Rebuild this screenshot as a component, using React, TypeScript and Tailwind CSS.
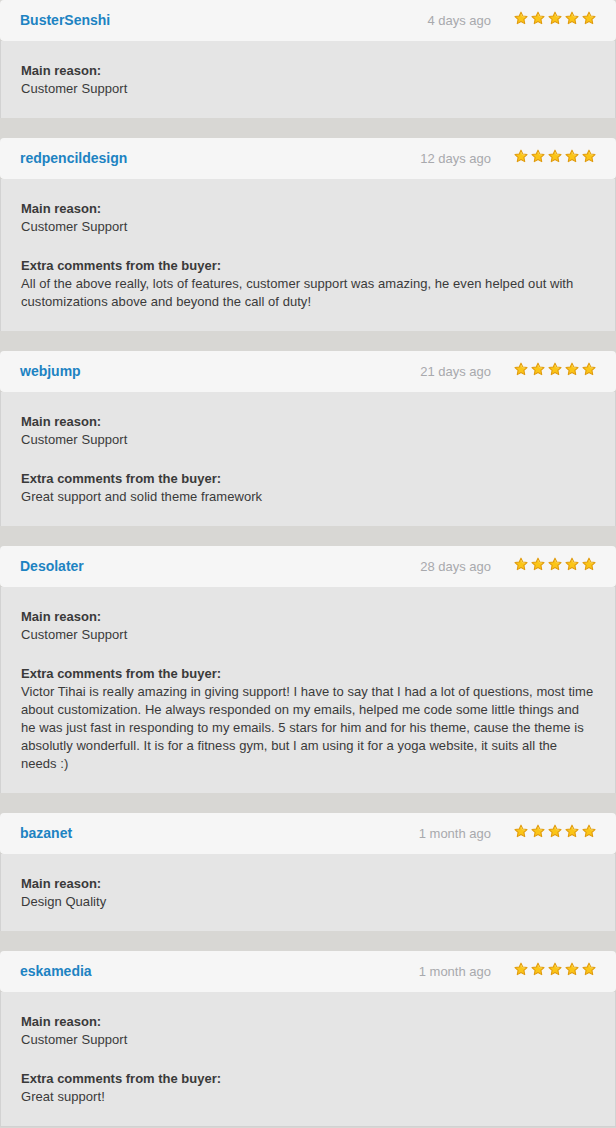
import React from 'react';

type Review = {
  user: string;
  when: string;
  reason: string;
  comment?: string;
};

const reviews: Review[] = [
  { user: 'BusterSenshi', when: '4 days ago', reason: 'Customer Support' },
  {
    user: 'redpencildesign',
    when: '12 days ago',
    reason: 'Customer Support',
    comment:
      'All of the above really, lots of features, customer support was amazing, he even helped out with customizations above and beyond the call of duty!',
  },
  {
    user: 'webjump',
    when: '21 days ago',
    reason: 'Customer Support',
    comment: 'Great support and solid theme framework',
  },
  {
    user: 'Desolater',
    when: '28 days ago',
    reason: 'Customer Support',
    comment:
      'Victor Tihai is really amazing in giving support! I have to say that I had a lot of questions, most time about customization. He always responded on my emails, helped me code some little things and he was just fast in responding to my emails. 5 stars for him and for his theme, cause the theme is absolutly wonderfull. It is for a fitness gym, but I am using it for a yoga website, it suits all the needs :)',
  },
  { user: 'bazanet', when: '1 month ago', reason: 'Design Quality' },
  {
    user: 'eskamedia',
    when: '1 month ago',
    reason: 'Customer Support',
    comment: 'Great support!',
  },
];

const Star = () => (
  <svg width="14" height="14" viewBox="0 0 24 23" className="block">
    <path
      d="M12 1.5l3.1 6.6 7.2.9-5.3 5 1.4 7.1L12 17.6l-6.4 3.5 1.4-7.1-5.3-5 7.2-.9z"
      fill="#fbc517"
      stroke="#e09a0c"
      strokeWidth="1.8"
      strokeLinejoin="round"
    />
    <path d="M12 4.5l2.2 4.7 5 .6" fill="none" stroke="#fde27a" strokeWidth="1" />
  </svg>
);

const ReviewCard = ({ r }: { r: Review }) => (
  <div>
    <div className="h-[41px] flex items-center bg-[#f6f6f6] rounded-[4px] shadow-[0_1px_1px_rgba(0,0,0,0.06)] pl-5 pr-[20px]">
      <div className="flex-1 text-[14px] font-bold text-[#1d83c2]">{r.user}</div>
      <div className="text-[13px] text-[#a8a9ad] mr-[23px]">{r.when}</div>
      <div className="flex gap-[3px] mb-[5px]">
        <Star />
        <Star />
        <Star />
        <Star />
        <Star />
      </div>
    </div>
    <div className="bg-[#e5e5e5] border-x border-[#d2d2d2] pl-5 pr-5 pt-[21px] pb-[20px] text-[13px] leading-[18px] tracking-[0.05px] text-[#3a3a3a]">
      <div className="font-bold tracking-normal">Main reason:</div>
      <div>{r.reason}</div>
      {r.comment && (
        <div className="mt-[21px]">
          <div className="font-bold tracking-normal">Extra comments from the buyer:</div>
          <div>{r.comment}</div>
        </div>
      )}
    </div>
  </div>
);

const App = () => {
  return (
    <div className="w-[616px] min-h-[1128px] bg-[#d8d7d4] font-['Liberation_Sans',Arial,sans-serif]">
      <div className="flex flex-col gap-5">
        {reviews.map((r) => (
          <ReviewCard key={r.user} r={r} />
        ))}
      </div>
      <div className="border-t border-[#d2d2d2]" />
    </div>
  );
};

export default App;
